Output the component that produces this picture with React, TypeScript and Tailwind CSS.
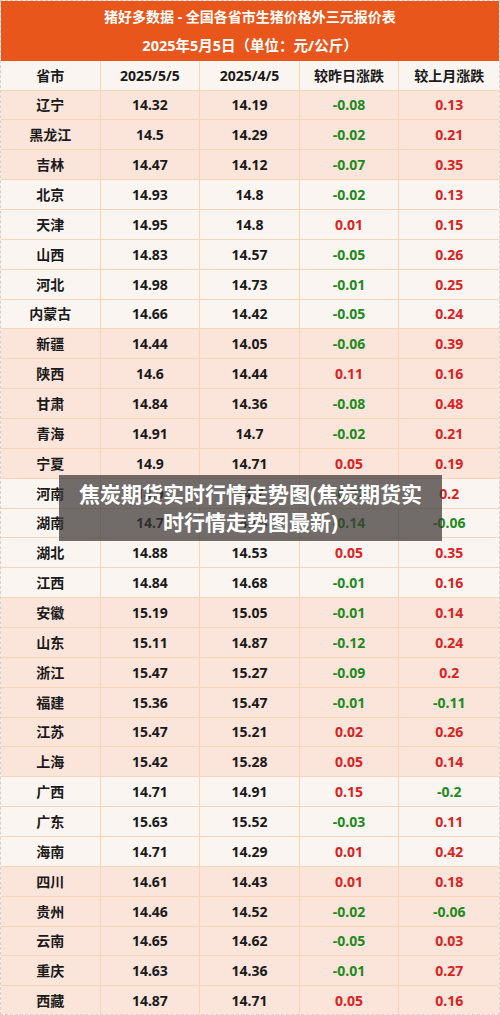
import React from "react";

type Row = [string, string, string, string, string, boolean];

const rows: Row[] = [
  ["辽宁", "14.32", "14.19", "-0.08", "0.13", true],
  ["黑龙江", "14.5", "14.29", "-0.02", "0.21", true],
  ["吉林", "14.47", "14.12", "-0.07", "0.35", true],
  ["北京", "14.93", "14.8", "-0.02", "0.13", false],
  ["天津", "14.95", "14.8", "0.01", "0.15", false],
  ["山西", "14.83", "14.57", "-0.05", "0.26", false],
  ["河北", "14.98", "14.73", "-0.01", "0.25", false],
  ["内蒙古", "14.66", "14.42", "-0.05", "0.24", false],
  ["新疆", "14.44", "14.05", "-0.06", "0.39", true],
  ["陕西", "14.6", "14.44", "0.11", "0.16", true],
  ["甘肃", "14.84", "14.36", "-0.08", "0.48", true],
  ["青海", "14.91", "14.7", "-0.02", "0.21", true],
  ["宁夏", "14.9", "14.71", "0.05", "0.19", true],
  ["河南", "14.9", "14.7", "-0.02", "0.2", false],
  ["湖南", "14.7", "14.84", "-0.14", "-0.06", false],
  ["湖北", "14.88", "14.53", "0.05", "0.35", false],
  ["江西", "14.84", "14.68", "-0.01", "0.16", false],
  ["安徽", "15.19", "15.05", "-0.01", "0.14", true],
  ["山东", "15.11", "14.87", "-0.12", "0.24", true],
  ["浙江", "15.47", "15.27", "-0.09", "0.2", true],
  ["福建", "15.36", "15.47", "-0.01", "-0.11", true],
  ["江苏", "15.47", "15.21", "0.02", "0.26", true],
  ["上海", "15.42", "15.28", "0.05", "0.14", true],
  ["广西", "14.71", "14.91", "0.15", "-0.2", false],
  ["广东", "15.63", "15.52", "-0.03", "0.11", false],
  ["海南", "14.71", "14.29", "0.01", "0.42", false],
  ["四川", "14.61", "14.43", "0.01", "0.18", true],
  ["贵州", "14.46", "14.52", "-0.02", "-0.06", true],
  ["云南", "14.65", "14.62", "-0.05", "0.03", true],
  ["重庆", "14.63", "14.36", "-0.01", "0.27", true],
  ["西藏", "14.87", "14.71", "0.05", "0.16", true],
];

const font = {
  fontFamily: '"Noto Sans", "Noto Sans CJK SC", sans-serif',
};

function chg(v: string) {
  return v.startsWith("-") ? "text-[#1e8a1e]" : "text-[#d8231f]";
}

export default function App() {
  return (
    <div
      className="relative w-[500px] h-[1015px] overflow-hidden bg-[#fbf5f1] border border-dashed border-[#d6d0cc]"
      style={font}
    >
      <div className="h-[60px] bg-[#e8561c] flex flex-col items-center text-white font-bold">
        <div className="h-[31px] flex items-center text-[14px]">猪好多数据 - 全国各省市生猪价格外三元报价表</div>
        <div className="h-[27px] flex items-center text-[14.5px]">2025年5月5日（单位：元/公斤）</div>
      </div>
      <div className="grid grid-cols-5 h-[29.5px] bg-[#fbf5f1] border-b border-[#f5d5b5] text-[14px] font-bold text-[#1a1a1a]">
        {["省市", "2025/5/5", "2025/4/5", "较昨日涨跌", "较上月涨跌"].map((h, i) => (
          <div
            key={h}
            className={`flex items-center justify-center ${i < 4 ? "border-r border-[#f5d5b5]" : ""}`}
          >
            {h}
          </div>
        ))}
      </div>
      {rows.map((r) => (
        <div
          key={r[0]}
          className={`grid grid-cols-5 h-[29.87px] border-b border-[#f5d5b5] text-[14px] font-bold ${
            r[5] ? "bg-[#fbe4da]" : "bg-[#fbf5f1]"
          }`}
        >
          <div className="flex items-center justify-center border-r border-[#f5d5b5] text-[#1a1a1a]">{r[0]}</div>
          <div className="flex items-center justify-center border-r border-[#f5d5b5] text-[#1a1a1a]">{r[1]}</div>
          <div className="flex items-center justify-center border-r border-[#f5d5b5] text-[#1a1a1a]">{r[2]}</div>
          <div className={`flex items-center justify-center border-r border-[#f5d5b5] ${chg(r[3])}`}>{r[3]}</div>
          <div className={`flex items-center justify-center ${chg(r[4])}`}>{r[4]}</div>
        </div>
      ))}
      <div className="absolute left-[58px] top-[474px] w-[383px] h-[66px] bg-[rgba(60,56,54,0.72)] flex flex-col items-center justify-center text-white font-bold text-[21px] leading-[28px]">
        <div className="whitespace-nowrap">焦炭期货实时行情走势图(焦炭期货实</div>
        <div className="whitespace-nowrap">时行情走势图最新)</div>
      </div>
    </div>
  );
}
